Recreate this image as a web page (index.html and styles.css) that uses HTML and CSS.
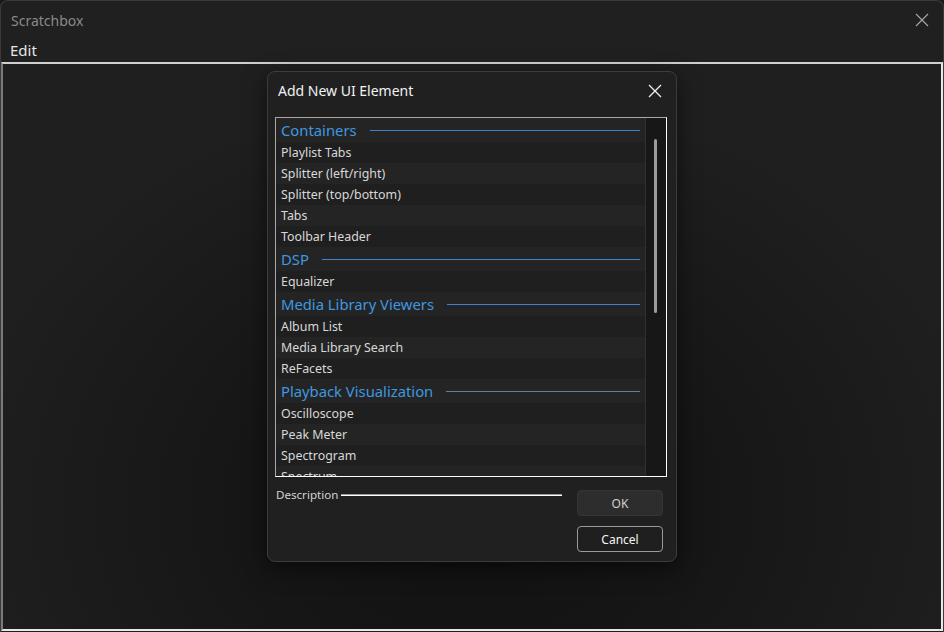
FILE: index.html
```html
<!DOCTYPE html>
<html>
<head>
<meta charset="utf-8">
<title>Scratchbox</title>
<link rel="stylesheet" href="styles.css">
</head>
<body>
<div class="window">
  <div class="titlebar">
    <span class="app-title">Scratchbox</span>
    <svg class="win-close" width="14" height="14" viewBox="0 0 14 14"><path d="M1 1L13 13M13 1L1 13" stroke="#a8a8a8" stroke-width="1.1" fill="none"/></svg>
  </div>
  <div class="menubar"><span class="menu-item">Edit</span></div>
  <div class="content">
    <div class="dialog">
      <div class="dlg-header">
        <span class="dlg-title">Add New UI Element</span>
        <svg class="dlg-close" width="14" height="14" viewBox="0 0 14 14"><path d="M1 1L13 13M13 1L1 13" stroke="#f0f0f0" stroke-width="1.3" fill="none"/></svg>
      </div>
      <div class="listbox">
        <div class="list">
          <div class="row group"><span>Containers</span><i class="rule"></i></div>
          <div class="row">Playlist Tabs</div>
          <div class="row">Splitter (left/right)</div>
          <div class="row">Splitter (top/bottom)</div>
          <div class="row">Tabs</div>
          <div class="row">Toolbar Header</div>
          <div class="row group"><span>DSP</span><i class="rule"></i></div>
          <div class="row">Equalizer</div>
          <div class="row group"><span>Media Library Viewers</span><i class="rule"></i></div>
          <div class="row">Album List</div>
          <div class="row">Media Library Search</div>
          <div class="row">ReFacets</div>
          <div class="row group"><span>Playback Visualization</span><i class="rule dim"></i></div>
          <div class="row">Oscilloscope</div>
          <div class="row">Peak Meter</div>
          <div class="row">Spectrogram</div>
          <div class="row">Spectrum</div>
        </div>
        <div class="scrollbar"><div class="thumb"></div></div>
      </div>
      <div class="footer">
        <div class="desc"><span class="desc-label">Description</span><i class="desc-line"></i></div>
        <button class="btn btn-ok">OK</button>
        <div></div>
        <button class="btn btn-cancel">Cancel</button>
      </div>
    </div>
  </div>
</div>
</body>
</html>
```

FILE: styles.css
```css
* { box-sizing: border-box; }
html, body { margin: 0; padding: 0; background: #1a1a1a; }
body { width: 944px; height: 632px; overflow: hidden; font-family: "Noto Sans", "Open Sans", sans-serif; }

.window {
  width: 944px; height: 632px;
  background: #202020;
  border: 1px solid #3a3a3a;
  border-bottom: none;
  border-radius: 8px 8px 0 0;
  display: flex; flex-direction: column;
}
.titlebar {
  height: 38px; flex: none;
  display: flex; align-items: center; justify-content: space-between;
  padding: 0 14px 0 10px;
}
.app-title { color: #8a8a8a; font-size: 14px; }
.win-close { display: block; }
.menubar { height: 23px; flex: none; display: flex; align-items: center; padding-left: 9px; padding-bottom: 1px; }
.menu-item { color: #e6e6e6; font-size: 15px; }

.content {
  flex: 1;
  border-top: 2px solid #cfcfcf;
  border-left: 2px solid #7a7a7a;
  border-right: 2px solid #e8e8e8;
  border-bottom: 2px solid #e8e8e8;
  margin-bottom: 1px;
  background: radial-gradient(ellipse 520px 420px at 50% 78%, #111111 0%, #161616 45%, #1f1f1f 100%);
  display: flex; flex-direction: column; align-items: center;
  padding-top: 7px;
}

.dialog {
  width: 410px; height: 491px;
  background: #202020;
  border: 1px solid #3c3c3c;
  border-radius: 8px;
  box-shadow: 0 6px 22px rgba(0,0,0,0.55);
  padding: 0 9px 9px 7px;
  display: flex; flex-direction: column;
}
.dlg-header {
  height: 45px; flex: none;
  display: flex; align-items: center; justify-content: space-between;
  padding: 0 5px 8px 3px;
}
.dlg-title { color: #f2f2f2; font-size: 14px; }
.dlg-close { display: block; }

.listbox {
  height: 360px; flex: none;
  border-top: 1px solid #a8a8a8;
  border-left: 1px solid #a8a8a8;
  border-right: 1px solid #ffffff;
  border-bottom: 1px solid #ffffff;
  display: flex;
  overflow: hidden;
  background: #1f1f1f;
}
.list { flex: 1; overflow: hidden; }
.row {
  height: 21px;
  padding-left: 5px;
  display: flex; align-items: center;
  color: #d8d8d8; font-size: 12.4px;
  background: #1f1f1f;
  white-space: nowrap;
}
.row:nth-child(odd) { background: #242424; }
.row.group { height: 24px; color: #3f98e0; font-size: 14.8px; padding-right: 5px; }
.rule { flex: 1; height: 1px; background: #3a86c8; margin-left: 13px; }
.rule.dim { background: #5a80a3; }

.scrollbar {
  width: 21px; flex: none;
  background: #171717;
  border-left: 1px solid #303030;
  padding: 21px 0 0 8px;
}
.thumb { width: 3px; height: 174px; background: #9b9b9b; border-radius: 1.5px; }

.footer {
  margin-top: 13px;
  display: grid;
  grid-template-columns: 1fr 86px;
  column-gap: 15px;
  row-gap: 10px;
  padding-right: 4px;
}
.desc { display: flex; align-items: flex-start; height: 26px; }
.desc-label { color: #d2d2d2; font-size: 11.6px; line-height: 12px; padding-left: 1px; margin-top: -1px; }
.desc-line { flex: 1; height: 2px; margin-top: 4px; margin-left: 3px; border-top: 1px solid #9a9a9a; background: #ffffff; }

.btn {
  height: 26px; width: 86px;
  font-family: inherit; font-size: 12px;
  border-radius: 4px;
  padding: 0;
}
.btn-ok { background: #2d2d2d; border: 1px solid #353535; color: #d0d0d0; }
.btn-cancel { background: #1f1f1f; border: 1px solid #9a9a9a; color: #f4f4f4; }
```
